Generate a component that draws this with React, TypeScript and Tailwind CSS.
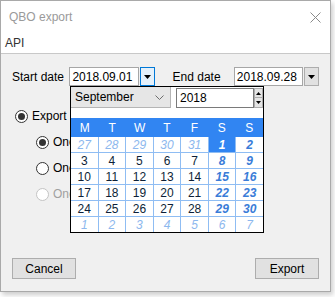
import React from 'react';

const font = { fontFamily: '"Liberation Sans", Arial, sans-serif' };

const Radio = ({ checked = false, disabled = false }: { checked?: boolean; disabled?: boolean }) => (
  <span
    className={`flex h-[13px] w-[13px] shrink-0 items-center justify-center rounded-full border bg-white ${
      disabled ? 'border-[#c4c4c4]' : 'border-[#333333]'
    }`}
  >
    {checked && <span className="h-[7px] w-[7px] rounded-full bg-[#333333]" />}
  </span>
);

const DownTriangle = () => (
  <svg width="7" height="4" viewBox="0 0 7 4">
    <path d="M0 0h7L3.5 4z" fill="#000" />
  </svg>
);

type Day = { n: number; kind: 'other' | 'day' | 'weekend' | 'selected' };

const weeks: Day[][] = [
  [27, 28, 29, 30, 31].map((n) => ({ n, kind: 'other' as const })).concat([
    { n: 1, kind: 'selected' },
    { n: 2, kind: 'weekend' },
  ]),
  ...[3, 10, 17, 24].map((start) =>
    Array.from({ length: 7 }, (_, i) => ({ n: start + i, kind: (i >= 5 ? 'weekend' : 'day') as Day['kind'] })),
  ),
  [1, 2, 3, 4, 5, 6, 7].map((n) => ({ n, kind: 'other' as const })),
];

const cellClass: Record<Day['kind'], string> = {
  other: 'bg-white italic text-[#8db8ee]',
  day: 'bg-white text-[#0d1f38]',
  weekend: 'bg-white italic font-bold text-[#3a7cd8]',
  selected: 'bg-[#3185f2] italic font-bold text-white',
};

const Calendar = () => (
  <div className="absolute left-[69px] top-[32px] flex h-[147px] w-[194px] flex-col border border-black bg-white">
    <div className="flex h-[31px] items-start">
      <div className="flex h-[21px] w-[100px] items-center justify-between border-r border-b border-[#b5b5b5] bg-[#e6e6e6] pl-[4px] pr-[6px]">
        <span className="text-[12px] text-black">September</span>
        <svg width="9" height="5" viewBox="0 0 9 5">
          <path d="M0.5 0.5 4.5 4.5 8.5 0.5" stroke="#6d6d6d" fill="none" />
        </svg>
      </div>
      <div className="ml-[5px] mt-[1px] flex h-[20px] w-[78px] items-center border border-[#7a7a7a] bg-white pl-[3px] text-[12px] text-black">
        2018
      </div>
      <div className="mt-[1px] flex flex-col">
        <span className="flex h-[10px] w-[9px] items-center justify-center border border-[#adadad] bg-[#e5e5e5]">
          <svg width="5" height="3" viewBox="0 0 5 3">
            <path d="M0 3h5L2.5 0z" fill="#000" />
          </svg>
        </span>
        <span className="flex h-[10px] w-[9px] items-center justify-center border border-t-0 border-[#adadad] bg-[#e5e5e5]">
          <svg width="5" height="3" viewBox="0 0 5 3">
            <path d="M0 0h5L2.5 3z" fill="#000" />
          </svg>
        </span>
      </div>
    </div>
    <div className="grid h-[19px] grid-cols-7 items-center bg-[#3185f2] text-center text-[12px] text-white">
      {['M', 'T', 'W', 'T', 'F', 'S', 'S'].map((d, i) => (
        <span key={i}>{d}</span>
      ))}
    </div>
    <div className="grid flex-1 grid-cols-7 gap-px bg-[#8fbdf3]">
      {weeks.flat().map((d, i) => (
        <span key={i} className={`flex h-[15px] items-center justify-center text-[12px] leading-none ${cellClass[d.kind]}`}>
          {d.n}
        </span>
      ))}
    </div>
  </div>
);

export default function App() {
  return (
    <div className="h-[297px] w-[335px] bg-white" style={font}>
      <div className="flex h-[292px] w-[331px] flex-col border border-[#a9a9a9] shadow-[2px_3px_5px_rgba(0,0,0,0.2)]">
        <div className="flex h-[32px] items-center justify-between bg-white pl-[8px] pr-[9px]">
          <span className="text-[12px] text-[#9a9a9a]">QBO export</span>
          <svg width="11" height="11" viewBox="0 0 11 11">
            <path d="M0.5 0.5 10.5 10.5M10.5 0.5 0.5 10.5" stroke="#8a8a8a" strokeWidth="1" />
          </svg>
        </div>
        <div className="flex h-[21px] items-center border-b border-[#c8c8c8] bg-white pl-[4px] text-[12px] text-[#333333]">
          API
        </div>

        <div className="relative flex flex-1 flex-col bg-[#f0f0f0] px-[11px] pb-[12px] pt-[13px] text-[12px] text-black">
          <div className="flex items-center">
            <span className="w-[58px]">Start date</span>
            <div className="flex h-[19px] w-[70px] items-center border border-[#a6a6a6] bg-white pl-[2px]">2018.09.01</div>
            <span className="ml-[1px] flex h-[19px] w-[15px] items-center justify-center border border-[#0078d7] bg-[#e5f1fb]">
              <DownTriangle />
            </span>
            <span className="ml-[18px] w-[62px]">End date</span>
            <div className="flex h-[19px] w-[70px] items-center border border-[#a6a6a6] bg-white pl-[2px]">2018.09.28</div>
            <span className="ml-[1px] flex h-[19px] w-[15px] items-center justify-center border border-[#adadad] bg-[#e1e1e1]">
              <DownTriangle />
            </span>
          </div>

          <div className="mt-[23px] flex flex-col items-start gap-[12px] whitespace-nowrap leading-[14px]">
            <label className="ml-[3px] flex h-[14px] items-center gap-[4px]">
              <Radio checked />
              <span>Export s</span>
            </label>
            <label className="ml-[24px] flex h-[14px] items-center gap-[4px]">
              <Radio checked />
              <span>One</span>
            </label>
            <label className="ml-[24px] flex h-[14px] items-center gap-[4px]">
              <Radio />
              <span>One</span>
            </label>
            <label className="ml-[24px] flex h-[14px] items-center gap-[4px] text-[#a0a0a0]">
              <Radio disabled />
              <span>One</span>
            </label>
          </div>

          <div className="flex-1" />

          <div className="flex justify-between">
            <button type="button" className="h-[21px] w-[64px] border border-[#adadad] bg-[#e1e1e1]">
              Cancel
            </button>
            <button type="button" className="h-[21px] w-[64px] border border-[#adadad] bg-[#e1e1e1]">
              Export
            </button>
          </div>

          <Calendar />
        </div>
      </div>
    </div>
  );
}
